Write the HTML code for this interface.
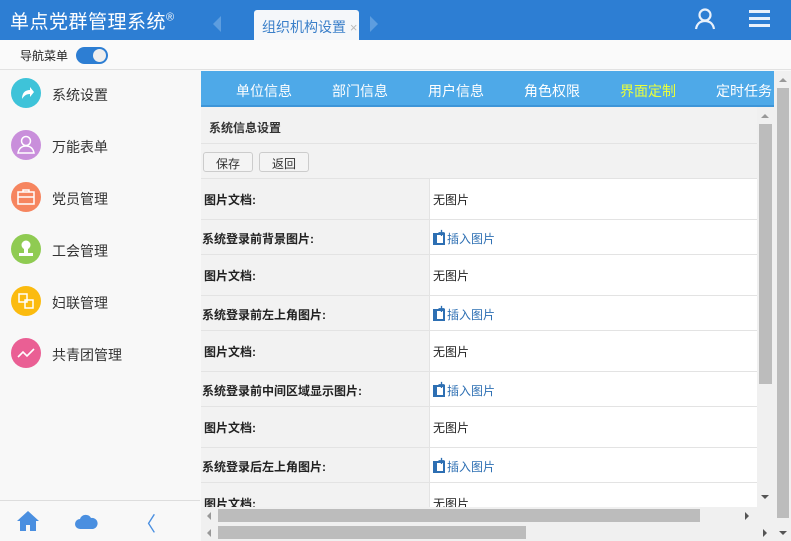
<!DOCTYPE html>
<html><head><meta charset="utf-8"><style>
*{margin:0;padding:0;box-sizing:border-box}
body{width:791px;height:541px;overflow:hidden;background:#f8f8f8;font-family:"Liberation Sans","Noto Sans CJK SC",sans-serif;font-size:13px;color:#333;position:relative}
.abs{position:absolute}
#hd{left:0;top:0;width:791px;height:40px;background:#2d7ed3}
#logo{left:10px;top:7px;color:#fff;font-size:19px;letter-spacing:0.5px}
#logo sup{font-size:11px}
#tab{left:254px;top:10px;width:105px;height:30px;background:#f5f7fa;border-radius:3px 3px 0 0;color:#3a7fc9;font-size:14px;padding:7px 0 0 8px}
#tab span{color:#bbb;font-size:13px}
.arr{top:16px;width:0;height:0;border-top:8px solid transparent;border-bottom:8px solid transparent}
#nav{left:0;top:40px;width:791px;height:30px;background:#fafafa;border-bottom:1px solid #e2e2e2}
#navt{left:20px;top:47px;font-size:12px;color:#222}
#sw{left:76px;top:47px;width:32px;height:17px;border-radius:9px;background:#2d7ed3}
#sw i{position:absolute;right:2px;top:2px;width:13px;height:13px;border-radius:50%;background:#eee}
.mi{left:0;width:200px;height:52px}
.mi .c{position:absolute;left:11px;top:8px;width:30px;height:30px;border-radius:50%}
.mi .c svg{position:absolute;left:0;top:0}
.mi .t{position:absolute;left:52px;top:15px;font-size:14px;color:#333}
#sbb{left:0;top:500px;width:200px;height:41px;border-top:1px solid #ddd}
#main{left:201px;top:71px;width:574px;height:470px;background:#fff}
#tabs{left:201px;top:71px;width:573px;height:36px;background:#4ea9e8;border-bottom:2px solid #3d95d8}
.tb{position:absolute;top:10px;color:#fff;font-size:14px}
.row{position:absolute;left:201px;width:556px;border-bottom:1px solid #e3e3e3}
.lab{position:absolute;left:0;top:0;width:229px;height:100%;background:#f2f2f2;border-right:1px solid #e3e3e3;font-weight:bold;font-size:12px;color:#222}
.val{position:absolute;left:232px;font-size:12px;color:#222}
.ins{color:#2d6fb3}
.ins b{display:inline-block;width:12px;height:12px;border:2px solid #2d6fb3;border-left-width:4px;vertical-align:-2px;margin-right:2px;position:relative}
.ins b:after{content:"+";position:absolute;left:1px;top:-9px;font-size:12px;color:#2d6fb3;font-weight:bold}
.btn{position:absolute;top:152px;height:20px;border:1px solid #ccc;border-radius:3px;background:#f4f4f4;font-size:12px;padding:2px 12px}
.tri{position:absolute;width:0;height:0}
</style></head><body>
<div id="hd" class="abs"></div>
<div id="logo" class="abs">单点党群管理系统<sup>®</sup></div>
<div class="abs arr" style="left:213px;border-right:8px solid #5d9ddf"></div>
<div id="tab" class="abs">组织机构设置 <span>×</span></div>
<div class="abs arr" style="left:370px;border-left:8px solid #5d9ddf"></div>
<svg class="abs" style="left:693px;top:8px" width="24" height="22" viewBox="0 0 24 22"><circle cx="12" cy="7" r="5.5" fill="none" stroke="#e9f1fb" stroke-width="2.2"/><path d="M3 21c1-6 5-8 9-8s8 2 9 8" fill="none" stroke="#e9f1fb" stroke-width="2.2"/></svg>
<div class="abs" style="left:749px;top:10px;width:21px;height:3px;background:#e9f1fb;box-shadow:0 7px 0 #e9f1fb,0 14px 0 #e9f1fb"></div>
<div id="nav" class="abs"></div>
<div id="navt" class="abs">导航菜单</div>
<div id="sw" class="abs"><i></i></div>

<div class="abs mi" style="top:70px"><div class="c" style="background:#3ec3d9"><svg width="30" height="30"><path d="M11 21c0-6 3-9 8-9v-3l4 5-4 5v-3c-4 0-6 2-8 5z" fill="#fff"/></svg></div><div class="t">系统设置</div></div>
<div class="abs mi" style="top:122px"><div class="c" style="background:#c98fdb"><svg width="30" height="30"><circle cx="15" cy="11" r="4.5" fill="none" stroke="#fff" stroke-width="1.5"/><path d="M7 23c1-5 4-7 8-7s7 2 8 7z" fill="none" stroke="#fff" stroke-width="1.5"/></svg></div><div class="t">万能表单</div></div>
<div class="abs mi" style="top:174px"><div class="c" style="background:#f6855f"><svg width="30" height="30"><rect x="7" y="10" width="16" height="12" fill="none" stroke="#fff" stroke-width="1.5"/><path d="M12 10V8h6v2M7 15h16" fill="none" stroke="#fff" stroke-width="1.5"/></svg></div><div class="t">党员管理</div></div>
<div class="abs mi" style="top:226px"><div class="c" style="background:#8fcb52"><svg width="30" height="30"><circle cx="15" cy="11" r="4.5" fill="#fff"/><path d="M13 15h4v4h5v3H8v-3h5z" fill="#fff"/></svg></div><div class="t">工会管理</div></div>
<div class="abs mi" style="top:278px"><div class="c" style="background:#fbbb0f"><svg width="30" height="30"><rect x="8" y="8" width="8" height="8" fill="none" stroke="#fff" stroke-width="1.5"/><rect x="14" y="14" width="8" height="8" fill="none" stroke="#fff" stroke-width="1.5"/></svg></div><div class="t">妇联管理</div></div>
<div class="abs mi" style="top:330px"><div class="c" style="background:#ea5f94"><svg width="30" height="30"><path d="M7 19l5-5 4 4 7-7" fill="none" stroke="#fff" stroke-width="1.6"/></svg></div><div class="t">共青团管理</div></div>
<div id="sbb" class="abs"></div>
<svg class="abs" style="left:16px;top:510px" width="24" height="22"><path d="M12 1L1 11h3v10h6v-6h4v6h6V11h3z" fill="#4a8fe0"/></svg>
<svg class="abs" style="left:74px;top:512px" width="24" height="18"><path d="M6 17a5 5 0 0 1 0-10a6 6 0 0 1 11-1a5 5 0 0 1 2 11z" fill="#4a8fe0"/></svg>
<div class="abs" style="left:136px;top:508px;font-size:20px;color:#4a8fe0">〈</div>

<div id="main" class="abs"></div>
<div id="tabs" class="abs">
<span class="tb" style="left:35px">单位信息</span><span class="tb" style="left:131px">部门信息</span><span class="tb" style="left:227px">用户信息</span><span class="tb" style="left:323px">角色权限</span><span class="tb" style="left:419px;color:#eaff3a">界面定制</span><span class="tb" style="left:515px">定时任务</span>
</div>
<div class="row" style="top:107px;height:37px;background:#f2f2f2"><span style="position:absolute;left:8px;top:12px;font-weight:bold;font-size:12px">系统信息设置</span></div>
<div class="row" style="top:144px;height:35px;background:#f2f2f2"></div>
<div class="btn" style="left:203px">保存</div><div class="btn" style="left:259px">返回</div>

<div class="row" style="top:179px;height:41px"><div class="lab" style="padding:12px 0 0 3px">图片文档:</div><div class="val" style="top:12px">无图片</div></div>
<div class="row" style="top:220px;height:35px"><div class="lab" style="padding:10px 0 0 1px">系统登录前背景图片:</div><div class="val ins" style="top:10px"><b></b>插入图片</div></div>
<div class="row" style="top:255px;height:41px"><div class="lab" style="padding:12px 0 0 3px">图片文档:</div><div class="val" style="top:12px">无图片</div></div>
<div class="row" style="top:296px;height:35px"><div class="lab" style="padding:10px 0 0 1px">系统登录前左上角图片:</div><div class="val ins" style="top:10px"><b></b>插入图片</div></div>
<div class="row" style="top:331px;height:41px"><div class="lab" style="padding:12px 0 0 3px">图片文档:</div><div class="val" style="top:12px">无图片</div></div>
<div class="row" style="top:372px;height:35px"><div class="lab" style="padding:10px 0 0 1px">系统登录前中间区域显示图片:</div><div class="val ins" style="top:10px"><b></b>插入图片</div></div>
<div class="row" style="top:407px;height:41px"><div class="lab" style="padding:12px 0 0 3px">图片文档:</div><div class="val" style="top:12px">无图片</div></div>
<div class="row" style="top:448px;height:35px"><div class="lab" style="padding:10px 0 0 1px">系统登录后左上角图片:</div><div class="val ins" style="top:10px"><b></b>插入图片</div></div>
<div class="row" style="top:483px;height:40px;border:0"><div class="lab" style="padding:12px 0 0 3px">图片文档:</div><div class="val" style="top:12px">无图片</div></div>

<div class="abs" style="left:757px;top:107px;width:17px;height:400px;background:#f0f0f0"></div>
<div class="abs" style="left:759px;top:124px;width:13px;height:260px;background:#bcbcbc"></div>
<div class="tri" style="left:761px;top:114px;border:4px solid transparent;border-bottom-color:#999;border-top:0"></div>
<div class="tri" style="left:761px;top:495px;border:4px solid transparent;border-top-color:#555;border-bottom:0"></div>
<div class="abs" style="left:201px;top:507px;width:573px;height:17px;background:#f0f0f0"></div>
<div class="abs" style="left:218px;top:509px;width:482px;height:13px;background:#bcbcbc"></div>
<div class="tri" style="left:207px;top:512px;border:4px solid transparent;border-right-color:#999;border-left:0"></div>
<div class="tri" style="left:745px;top:512px;border:4px solid transparent;border-left-color:#555;border-right:0"></div>
<div class="abs" style="left:201px;top:524px;width:590px;height:17px;background:#f0f0f0"></div>
<div class="abs" style="left:218px;top:526px;width:308px;height:13px;background:#bcbcbc"></div>
<div class="tri" style="left:207px;top:529px;border:4px solid transparent;border-right-color:#999;border-left:0"></div>
<div class="tri" style="left:763px;top:529px;border:4px solid transparent;border-left-color:#555;border-right:0"></div>
<div class="abs" style="left:774px;top:71px;width:17px;height:453px;background:#f0f0f0"></div>
<div class="abs" style="left:777px;top:88px;width:12px;height:430px;background:#bcbcbc"></div>
<div class="tri" style="left:779px;top:78px;border:4px solid transparent;border-bottom-color:#999;border-top:0"></div>
<div class="tri" style="left:779px;top:531px;border:4px solid transparent;border-top-color:#555;border-bottom:0"></div>
</body></html>
